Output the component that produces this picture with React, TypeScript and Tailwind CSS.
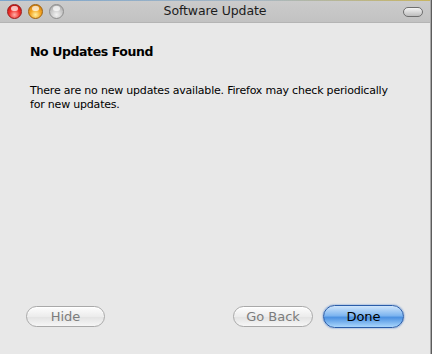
const font = { fontFamily: '"DejaVu Sans", "Liberation Sans", sans-serif' }

function Light({ tone }: { tone: 'red' | 'amber' | 'gray' }) {
  const cls =
    tone === 'red'
      ? 'border-[#9a1a1a] bg-[radial-gradient(circle_at_50%_75%,#ffb0a8_0%,#f0302a_45%,#b00c0c_100%)]'
      : tone === 'amber'
        ? 'border-[#a0620c] bg-[radial-gradient(circle_at_50%_75%,#fff0a0_0%,#f5a623_45%,#c2700a_100%)]'
        : 'border-[#8e8e8e] bg-[radial-gradient(circle_at_50%_75%,#f2f2f2_0%,#c8c8c8_50%,#9c9c9c_100%)]'
  return (
    <span className={`relative block h-[15px] w-[15px] rounded-full border ${cls}`}>
      <span className="absolute left-[3px] top-[1px] h-[5px] w-[7px] rounded-full bg-white/70" />
    </span>
  )
}

function PlainButton({ label, width }: { label: string; width: string }) {
  return (
    <button
      className={`flex h-[21px] ${width} items-center justify-center rounded-full border border-[#a9a9a9] bg-[linear-gradient(#fdfdfd,#ececec_50%,#e2e2e2_51%,#f6f6f6)] text-[13px] text-[#7c7c7c] shadow-[inset_0_1px_0_#fff]`}
    >
      {label}
    </button>
  )
}

export default function App() {
  return (
    <div className="flex h-[354px] w-[432px] bg-[#5c5c5c]" style={font}>
      <div className="flex w-[430px] flex-col bg-[#e8e8e8]">
        <div className="h-px bg-[linear-gradient(90deg,#7aa4cc,#a8b8c4_60%,#c8b460)]" />
        <div className="grid h-[22px] grid-cols-[1fr_auto_1fr] items-center border-b border-[#b4b4b4] bg-[linear-gradient(#cbcbcb,#c2c2c2)] px-[7px]">
          <div className="flex gap-[6px]">
            <Light tone="red" />
            <Light tone="amber" />
            <Light tone="gray" />
          </div>
          <div className="text-center text-[12.5px] tracking-[-0.1px] text-[#1c1c1c]">Software Update</div>
          <div className="flex justify-end pr-[0px]">
            <span className="block h-[10px] w-[20px] rounded-full border border-[#6e6e6e] bg-[linear-gradient(#f4f4f4,#bdbdbd)]" />
          </div>
        </div>
        <div className="flex flex-1 flex-col px-[30px] pb-[26px] pt-[20px]">
          <h1 className="text-[12.5px] font-bold tracking-[-0.4px] text-black">No Updates Found</h1>
          <p className="mt-[22px] text-[11px] leading-[14px] tracking-[-0.2px] text-black">
            There are no new updates available. Firefox may check periodically
            <br />
            for new updates.
          </p>
          <div className="-mx-[4px] mt-auto flex items-center">
            <PlainButton label="Hide" width="w-[79px]" />
            <div className="flex-1" />
            <PlainButton label="Go Back" width="w-[80px]" />
            <button className="ml-[10px] flex h-[23px] w-[81px] items-center justify-center rounded-full border border-[#2a5ca8] bg-[linear-gradient(#cfe5fb,#7fb6f0_45%,#4d92e2_55%,#a9d6fc)] text-[13px] text-black shadow-[0_0_2px_#4a80d0]">
              Done
            </button>
          </div>
        </div>
      </div>
      <div className="w-px bg-[#a8a8a8]" />
    </div>
  )
}
